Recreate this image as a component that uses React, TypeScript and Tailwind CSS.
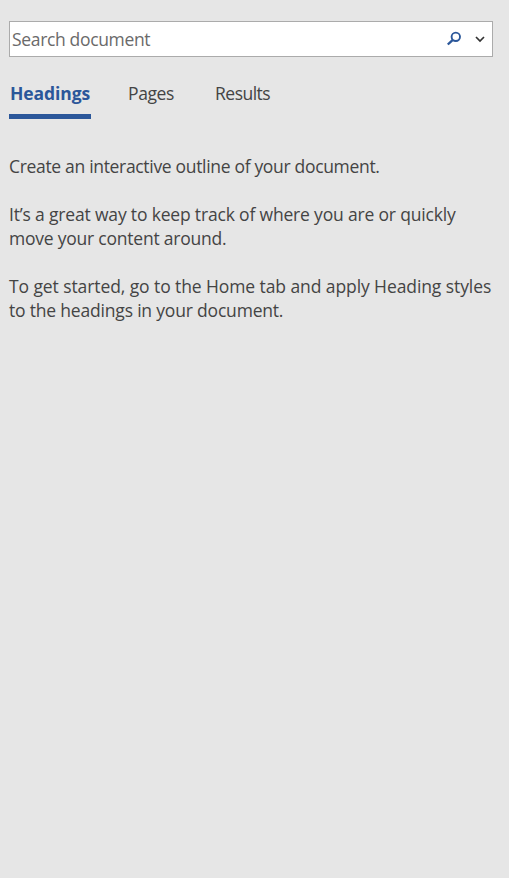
const paragraphs = [
  [{ text: 'Create an interactive outline of your document.', tracking: 'tracking-[-0.32px]' }],
  [
    { text: 'It’s a great way to keep track of where you are or quickly', tracking: 'tracking-[-0.175px]' },
    { text: 'move your content around.', tracking: 'tracking-[-0.22px]' },
  ],
  [
    { text: 'To get started, go to the Home tab and apply Heading styles', tracking: 'tracking-[-0.09px]' },
    { text: 'to the headings in your document.', tracking: 'tracking-[-0.19px]' },
  ],
];

function SearchBox() {
  return (
    <div className="flex h-9 w-[484px] items-center border border-[#ababab] bg-white pl-0.5">
      <span className="flex-1 tracking-[-0.34px] whitespace-nowrap text-[#6a6a6a]">Search document</span>
      <svg className="mr-[13px] h-4 w-4" viewBox="0 0 16 16" fill="none" stroke="#2b579a">
        <circle cx="9.8" cy="5.8" r="4.2" strokeWidth="1.9" />
        <path d="M6.8 8.8 L1.8 13.5" strokeWidth="2.4" />
      </svg>
      <svg className="mr-[7px] h-2.5 w-2.5" viewBox="0 0 10 10" fill="none" stroke="#333" strokeWidth="1.7">
        <path d="M1 3 L5 7 L9 3" />
      </svg>
    </div>
  );
}

function Tabs() {
  return (
    <nav className="mt-6 flex h-[38px] items-start leading-6">
      <button className="h-[38px] w-[82px] border-b-5 border-[#2b579a] pl-px text-left leading-6 font-bold tracking-[-0.07px] whitespace-nowrap text-[#2b579a]">
        <span className="block h-[33px]">Headings</span>
      </button>
      <button className="ml-[37px] w-[87px] text-left leading-6 tracking-[-0.4px]">Pages</button>
      <button className="text-left leading-6 tracking-[-0.5px]">Results</button>
    </nav>
  );
}

export default function App() {
  return (
    <main className="min-h-screen overflow-hidden bg-[#e6e6e6] px-[9px] pt-[21px] font-['Open_Sans','Noto_Sans',sans-serif] text-[17.5px] text-[#444]">
      <SearchBox />
      <Tabs />
      <section className="mt-[35px] flex flex-col gap-6 leading-6">
        {paragraphs.map((lines) => (
          <p key={lines[0].text} className="whitespace-nowrap">
            {lines.map((line) => (
              <span key={line.text} className={`block ${line.tracking}`}>{line.text}</span>
            ))}
          </p>
        ))}
      </section>
    </main>
  );
}
